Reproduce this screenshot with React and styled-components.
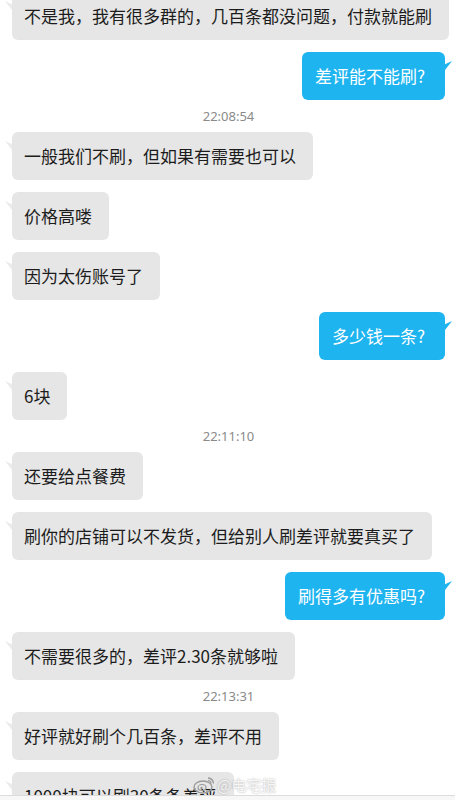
import React from "react";
import styled, { createGlobalStyle } from "styled-components";

const GlobalStyle = createGlobalStyle`
  html, body {
    margin: 0;
    padding: 0;
    background: #ffffff;
  }
  body {
    font-family: "Noto Sans CJK SC", "Noto Sans", sans-serif;
  }
`;

const Screen = styled.div`
  position: relative;
  width: 455px;
  height: 800px;
  overflow: hidden;
  background: #ffffff;
`;

const Thread = styled.div`
  display: flex;
  flex-direction: column;
  gap: 12px;
  margin-top: -8px;
  padding: 0 10px 0 12px;
`;

const Row = styled.div`
  display: flex;
  justify-content: ${(p) => (p.$mine ? "flex-end" : "flex-start")};
`;

const Bubble = styled.div`
  position: relative;
  box-sizing: border-box;
  height: 48px;
  padding: ${(p) => (p.$mine ? "12px 20px 12px 13px" : "12px 17px 12px 12px")};
  border-radius: 6px;
  background: ${(p) => (p.$mine ? "#1eb4ef" : "#e6e6e6")};
  color: ${(p) => (p.$mine ? "#ffffff" : "#1c1c1c")};
  font-size: 17px;
  line-height: 24px;
  white-space: nowrap;

  &::before {
    content: "";
    position: absolute;
    top: 9px;
    width: 7px;
    height: 9px;
    background: ${(p) => (p.$mine ? "#1eb4ef" : "#ebebeb")};
    ${(p) =>
      p.$mine
        ? "right: -7px; clip-path: polygon(100% 0, 0 35%, 0 100%);"
        : "left: -7px; clip-path: polygon(0 0, 100% 35%, 100% 100%);"}
  }
`;

const Stamp = styled.div`
  margin: -4px 0;
  text-align: center;
  font-family: "Noto Sans", "Liberation Sans", sans-serif;
  font-size: 13px;
  line-height: 16px;
  color: #8a8a8a;
`;

const Footer = styled.div`
  position: absolute;
  left: 0;
  right: 0;
  top: 795px;
  height: 5px;
  border-top: 1px solid #dcdcdc;
  background: #f7f7f7;
`;

const Watermark = styled.div`
  position: absolute;
  left: 193px;
  top: 776px;
  display: flex;
  align-items: center;
  gap: 2px;
  font-size: 15px;
  line-height: 18px;
  color: rgba(255, 255, 255, 0.85);
  text-shadow: 0 0 2px rgba(0, 0, 0, 0.35);
`;

const messages = [
  { text: "不是我，我有很多群的，几百条都没问题，付款就能刷" },
  { text: "差评能不能刷?", mine: true },
  { stamp: "22:08:54" },
  { text: "一般我们不刷，但如果有需要也可以" },
  { text: "价格高喽" },
  { text: "因为太伤账号了" },
  { text: "多少钱一条?", mine: true },
  { text: "6块" },
  { stamp: "22:11:10" },
  { text: "还要给点餐费" },
  { text: "刷你的店铺可以不发货，但给别人刷差评就要真买了" },
  { text: "刷得多有优惠吗?", mine: true },
  { text: "不需要很多的，差评2.30条就够啦" },
  { stamp: "22:13:31" },
  { text: "好评就好刷个几百条，差评不用" },
  { text: "1000块可以刷30条条差评" },
];

function WeiboMark() {
  return (
    <svg width="22" height="18" viewBox="0 0 22 18">
      <ellipse cx="10" cy="11" rx="9" ry="6" fill="none" stroke="#9a9a9a" strokeWidth="1.4" />
      <ellipse cx="9" cy="11.5" rx="4" ry="3" fill="none" stroke="#9a9a9a" strokeWidth="1.2" />
      <circle cx="8.5" cy="12" r="1.2" fill="#9a9a9a" />
      <path d="M15 2 A6 6 0 0 1 20.5 7.5" fill="none" stroke="#9a9a9a" strokeWidth="1.3" />
      <path d="M15 4.5 A3 3 0 0 1 18 7.5" fill="none" stroke="#9a9a9a" strokeWidth="1.1" />
    </svg>
  );
}

export default function App() {
  return (
    <Screen>
      <GlobalStyle />
      <Thread>
        {messages.map((m, i) =>
          m.stamp ? (
            <Stamp key={i}>{m.stamp}</Stamp>
          ) : (
            <Row key={i} $mine={m.mine}>
              <Bubble $mine={m.mine}>{m.text}</Bubble>
            </Row>
          )
        )}
      </Thread>
      <Footer />
      <Watermark>
        <WeiboMark />
        <span>@电宅报</span>
      </Watermark>
    </Screen>
  );
}
